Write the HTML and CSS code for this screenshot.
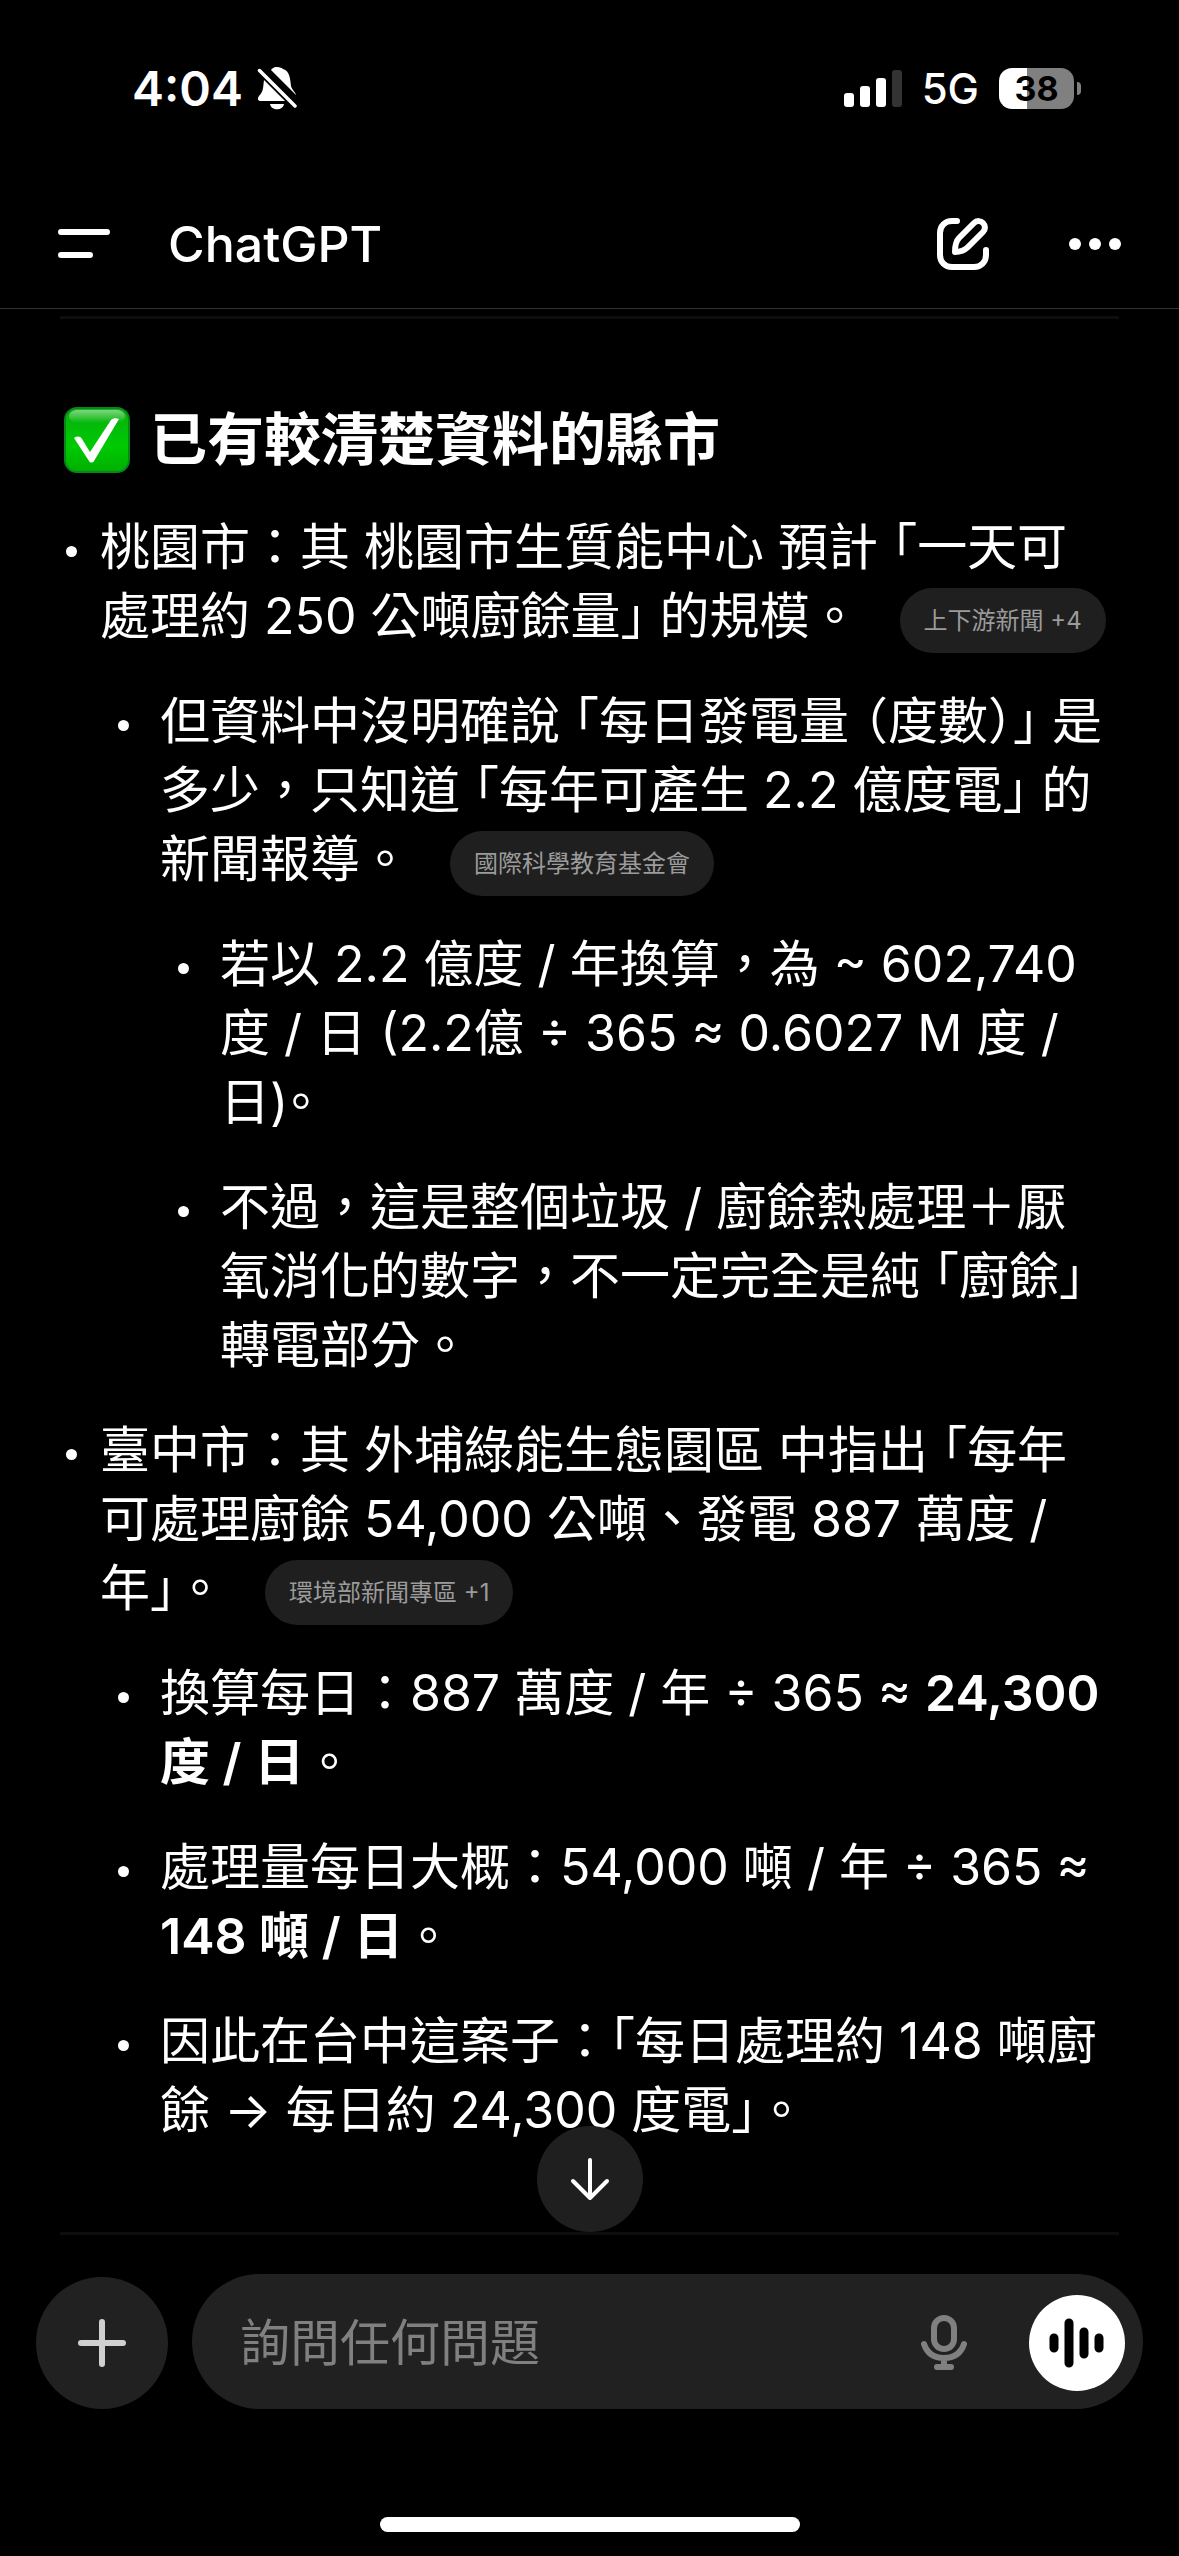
FILE: index.html
```html
<!DOCTYPE html>
<html lang="zh-Hant">

<head>
    <meta charset="UTF-8">
    <meta name="viewport" content="width=device-width, initial-scale=1.0">
    <title>ChatGPT</title>
    <link rel="stylesheet" href="styles.css">
</head>

<body>
    <div class="status">
        <div class="status-left">
            <span class="time">4:04</span>
            <svg class="bell" viewBox="0 0 40 44" width="40" height="44">
                <path d="M20 1c-4 0-5 2-6 3L39 29c0-2-4-5-5-9-1-7-1-15-8-17-1-1-3-2-6-2z" fill="#fff" />
                <path d="M7 14c-1 9-1 12-5 16-2 3-1 5 2 5h24z" fill="#fff" />
                <path d="M13 38h14c-1 7-13 7-14 0z" fill="#fff" />
                <path d="M2.500 4.500L38 40" stroke="#fff" stroke-width="3.500" stroke-linecap="round" />
            </svg>
        </div>
        <div class="status-right">
            <svg viewBox="0 0 58 38" width="58" height="38">
                <rect x="0" y="24" width="10" height="14" rx="3" fill="#fff" />
                <rect x="16" y="17" width="10" height="21" rx="3" fill="#fff" />
                <rect x="32" y="9" width="10" height="29" rx="3" fill="#fff" />
                <rect x="48" y="1" width="10" height="37" rx="3" fill="#333" />
            </svg>
            <span class="network">5G</span>
            <div class="battery">
                <span class="level">38</span>
                <span class="nub"></span>
            </div>
        </div>
    </div>

    <header class="header">
        <button class="icon-btn" aria-label="選單">
            <svg viewBox="0 0 52 52" width="52" height="52" stroke="#fff" stroke-width="6" stroke-linecap="round">
                <path d="M3 14h46M3 37h29" />
            </svg>
        </button>
        <h1 class="title">ChatGPT</h1>
        <button class="icon-btn" aria-label="新對話">
            <svg viewBox="0 0 52 52" width="52" height="52" fill="none" stroke="#fff" stroke-width="6" stroke-linecap="round" stroke-linejoin="round">
                <path d="M20 3h-5C8 3 3 8 3 15v22c0 7 5 12 12 12h22c7 0 12-5 12-12v-5" />
                <path d="M18 34c0-6 1-11 4-14L37 5c3-3 7-2 9 0s3 6 0 9L31 29c-3 3-7 5-13 5z" />
            </svg>
        </button>
        <button class="icon-btn" aria-label="更多">
            <svg viewBox="0 0 52 52" width="52" height="52" fill="#fff">
                <circle cx="6" cy="26" r="6" />
                <circle cx="26" cy="26" r="6" />
                <circle cx="46" cy="26" r="6" />
            </svg>
        </button>
    </header>

    <main class="chat">
        <hr class="rule">
        <h2 class="heading">
            <svg class="check" viewBox="0 0 66 66" width="66" height="66" role="img" aria-label="✅">
                <defs>
                    <linearGradient id="green" x1="0" y1="0" x2="0" y2="1">
                        <stop offset="0" stop-color="#1fae25" />
                        <stop offset=".2" stop-color="#04b70a" />
                        <stop offset=".6" stop-color="#00ca04" />
                        <stop offset="1" stop-color="#00ae00" />
                    </linearGradient>
                    <linearGradient id="shine" x1="0" y1="0" x2="0" y2="1">
                        <stop offset="0" stop-color="#a5e8a2" />
                        <stop offset="1" stop-color="#a5e8a2" stop-opacity="0" />
                    </linearGradient>
                </defs>
                <rect x="1" y="1" width="64" height="64" rx="12" fill="url(#green)" stroke="#07871a" stroke-width="2" />
                <rect x="5" y="3" width="56" height="13" rx="8" fill="url(#shine)" opacity=".7" />
                <path d="M10 31c3-2 6-2 8 1l8 13L47 13c2-2 5-2 8-1L30 54c-1 2-4 2-5 0z" fill="#fff" />
            </svg>
            <span>已有較清楚資料的縣市</span>
        </h2>

        <ul class="list">
            <li>
                <p>桃園市：其 桃園市生質能中心 預計<span class="open">「</span>一天可<br>處理約 250 公噸廚餘量<span class="close">」</span>的規模。<a class="chip" href="#">上下游新聞 +4</a></p>
                <ul class="list">
                    <li>
                        <p>但資料中沒明確說<span class="open">「</span>每日發電量<span class="open">（</span>度數<span class="close">）」</span>是<br>多少，只知道<span class="open">「</span>每年可產生 2.2 億度電<span class="close">」</span>的<br>新聞報導。<a class="chip" href="#">國際科學教育基金會</a></p>
                        <ul class="list">
                            <li>
                                <p>若以 2.2 億度 / 年換算，為 ~ 602,740<br>度 / 日 (2.2億 ÷ 365 ≈ 0.6027 M 度 /<br>日)<span class="half">。</span></p>
                            </li>
                            <li>
                                <p>不過，這是整個垃圾 / 廚餘熱處理＋厭<br>氧消化的數字，不一定完全是純<span class="open">「</span>廚餘<span class="half">」</span><br>轉電部分。</p>
                            </li>
                        </ul>
                    </li>
                </ul>
            </li>
            <li>
                <p>臺中市：其 外埔綠能生態園區 中指出<span class="open">「</span>每年<br>可處理廚餘 54,000 公噸、發電 887 萬度 /<br>年<span class="half">」</span>。<a class="chip" href="#">環境部新聞專區 +1</a></p>
                <ul class="list">
                    <li>
                        <p>換算每日：887 萬度 / 年 ÷ 365 ≈ <strong>24,300<br>度 / 日</strong>。</p>
                    </li>
                    <li>
                        <p>處理量每日大概：54,000 噸 / 年 ÷ 365 ≈<br><strong>148 噸 / 日</strong>。</p>
                    </li>
                    <li>
                        <p>因此在台中這案子：<span class="half">「</span>每日處理約 148 噸廚<br>餘 → 每日約 24,300 度電<span class="half">」</span>。</p>
                    </li>
                </ul>
            </li>
        </ul>
    </main>

    <footer class="footer">
        <button class="scroll-btn" aria-label="捲動到底部">
            <svg viewBox="0 0 40 44" width="40" height="44" fill="none" stroke="#fff" stroke-width="4" stroke-linecap="round" stroke-linejoin="round">
                <path d="M20 3v37M3 24l17 17 17-17" />
            </svg>
        </button>
        <hr class="rule">
        <div class="composer">
            <button class="plus-btn" aria-label="新增">
                <svg viewBox="0 0 50 50" width="50" height="50" stroke="#d0d0d0" stroke-width="6" stroke-linecap="round">
                    <path d="M25 4v42M4 25h42" />
                </svg>
            </button>
            <div class="field">
                <input class="input" type="text" placeholder="詢問任何問題" aria-label="詢問任何問題">
                <button class="icon-btn" aria-label="語音輸入">
                    <svg viewBox="0 0 46 56" width="46" height="56" fill="none" stroke="#808080" stroke-width="6" stroke-linecap="round">
                        <rect x="13" y="3" width="20" height="31" rx="10" />
                        <path d="M3 29c3 9 10 14 20 14s17-5 20-14M23 43v9M16 52h14" />
                    </svg>
                </button>
                <button class="voice-btn" aria-label="語音模式">
                    <svg viewBox="0 0 56 50" width="56" height="50" stroke="#000" stroke-width="9" stroke-linecap="round">
                        <path d="M5 20v10M20 5v40M35 14v22M50 20v10" />
                    </svg>
                </button>
            </div>
        </div>
        <div class="home-bar"></div>
    </footer>
</body>

</html>
```
FILE: styles.css
```css
* {
    box-sizing: border-box;
}

body {
    margin: 0;
    min-height: 100vh;
    display: flex;
    flex-direction: column;
    background-color: #000;
    color: #fff;
    font-family: Inter, "Noto Sans CJK TC", sans-serif;
    font-size: 50px;
    line-height: 69px;
}

button {
    display: flex;
    flex-shrink: 0;
    align-items: center;
    justify-content: center;
    padding: 0;
    border: none;
    background: none;
}

/* status bar */
.status {
    display: flex;
    justify-content: space-between;
    align-items: center;
    height: 176px;
    padding: 0 98px 0 132px;
}

.status-left,
.status-right {
    display: flex;
    align-items: center;
}

.status-left {
    gap: 14px;
}

.status-right {
    gap: 20px;
}

.time {
    font-weight: 600;
    font-size: 48px;
}

.network {
    font-size: 42px;
    font-weight: 500;
}

.battery {
    display: flex;
    align-items: center;
    gap: 3px;
}

.level {
    width: 75px;
    height: 41px;
    border-radius: 13px;
    background: linear-gradient(to right, #fff 38%, #808080 38%);
    color: #000;
    font-size: 34px;
    font-weight: 700;
    line-height: 41px;
    text-align: center;
}

.nub {
    width: 4px;
    height: 13px;
    border-radius: 0 4px 4px 0;
    background-color: #808080;
}

/* header */
.header {
    display: flex;
    align-items: center;
    height: 133px;
    padding: 4px 58px 0;
    border-bottom: 1px solid #333;
}

.title {
    flex: 1;
    margin: 0 0 0 58px;
    font-size: 50px;
    font-weight: 500;
}

.header .icon-btn + .icon-btn {
    margin-left: 80px;
}

/* conversation */
.chat {
    flex: 1;
    padding: 7px 60px 0;
}

.rule {
    height: 3px;
    margin: 0;
    border: none;
    background-color: #0d0d0d;
}

.heading {
    display: flex;
    align-items: center;
    gap: 20px;
    margin: 86px 0 39px;
    padding-left: 4px;
    font-size: 57px;
    font-weight: 600;
}

.list {
    margin: 0;
    padding: 0 0 0 40px;
    list-style: none;
}

.list .list {
    padding-left: 60px;
}

.list p {
    position: relative;
    margin: 0 0 36px;
    white-space: nowrap;
}

.list p::before {
    content: "";
    position: absolute;
    top: 33px;
    left: -34px;
    width: 11px;
    height: 11px;
    border-radius: 50%;
    background-color: #fff;
}

.list .list p::before {
    left: -42px;
}

strong {
    font-weight: 600;
}

/* half-width punctuation */
.open,
.close,
.half {
    font-feature-settings: "halt";
}

.open {
    margin-left: 14px;
}

.close {
    margin-right: 14px;
}

.chip {
    display: inline-block;
    height: 65px;
    margin: -10px 0 -10px 40px;
    padding: 0 24px;
    border-radius: 33px;
    background-color: #1f1f1f;
    color: #9b9b9b;
    font-size: 24px;
    line-height: 65px;
    text-decoration: none;
    vertical-align: middle;
}

/* composer */
.footer {
    position: relative;
    padding-bottom: 24px;
}

.footer .rule {
    margin: 0 60px;
}

.scroll-btn {
    position: absolute;
    bottom: 100%;
    left: 50%;
    width: 106px;
    height: 106px;
    margin-left: -53px;
    border-radius: 50%;
    background-color: #1f1f1f;
}

.composer {
    display: flex;
    align-items: flex-end;
    gap: 24px;
    padding: 39px 36px 108px;
}

.plus-btn {
    width: 132px;
    height: 132px;
    border-radius: 50%;
    background-color: #212121;
}

.field {
    flex: 1;
    min-width: 0;
    display: flex;
    align-items: center;
    height: 135px;
    padding: 3px 18px 0 48px;
    border-radius: 68px;
    background-color: #212121;
}

.input {
    flex: 1;
    min-width: 0;
    padding: 0;
    border: none;
    outline: none;
    background: none;
    color: #fff;
    font: inherit;
}

.input::placeholder {
    color: #808080;
    opacity: 1;
}

.voice-btn {
    width: 96px;
    height: 96px;
    margin-left: 62px;
    border-radius: 50%;
    background-color: #fff;
}

.home-bar {
    width: 420px;
    height: 15px;
    margin: 0 auto;
    border-radius: 8px;
    background-color: #fff;
}
```
